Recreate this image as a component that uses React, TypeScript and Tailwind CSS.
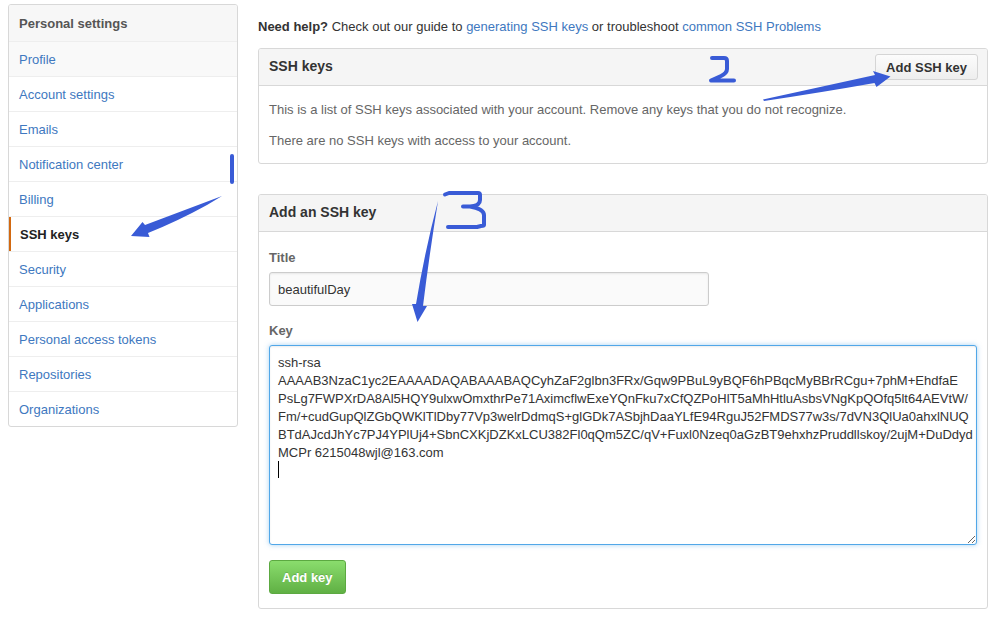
import React from 'react';

const navItems = [
  'Profile',
  'Account settings',
  'Emails',
  'Notification center',
  'Billing',
  'SSH keys',
  'Security',
  'Applications',
  'Personal access tokens',
  'Repositories',
  'Organizations',
];

const sshKey = [
  'ssh-rsa',
  'AAAAB3NzaC1yc2EAAAADAQABAAABAQCyhZaF2glbn3FRx/Gqw9PBuL9yBQF6hPBqcMyBBrRCgu+7phM+EhdfaE',
  'PsLg7FWPXrDA8Al5HQY9ulxwOmxthrPe71AximcflwExeYQnFku7xCfQZPoHlT5aMhHtluAsbsVNgKpQOfq5lt64AEVtW/',
  'Fm/+cudGupQlZGbQWKlTlDby77Vp3welrDdmqS+glGDk7ASbjhDaaYLfE94RguJ52FMDS77w3s/7dVN3QlUa0ahxlNUQ',
  'BTdAJcdJhYc7PJ4YPlUj4+SbnCXKjDZKxLCU382Fl0qQm5ZC/qV+Fuxl0Nzeq0aGzBT9ehxhzPruddllskoy/2ujM+DuDdyd',
  'MCPr 6215048wjl@163.com',
  '',
].join('\n');

function navItemClass(item: string) {
  if (item === 'SSH keys') return 'border-l-2 border-l-[#d26911] pl-[9px] font-bold text-[#222]';
  if (item === 'Profile') return 'bg-[#f9f9f9] pl-[10px] text-[#4078c0]';
  return 'pl-[10px] text-[#4078c0]';
}

function Sidebar() {
  return (
    <nav
      aria-label="Personal settings"
      className="w-[230px] shrink-0 self-start overflow-hidden rounded-[3px] border border-[#d8d8d8]"
    >
      <h2 className="h-9 bg-[#f7f7f7] pl-[10px] leading-[37px] font-bold text-[#555]">Personal settings</h2>
      <ul>
        {navItems.map((item) => (
          <li key={item} className="border-t border-[#eee]">
            <a href="#" className={`block h-[34px] leading-[35px] ${navItemClass(item)}`}>
              {item}
            </a>
          </li>
        ))}
      </ul>
    </nav>
  );
}

function Panel({ title, action, children }: { title: string; action?: React.ReactNode; children: React.ReactNode }) {
  return (
    <section className="rounded-[3px] border border-[#d8d8d8]">
      <header className="flex h-[37px] items-center justify-between rounded-t-[2px] border-b border-[#d8d8d8] bg-[#f5f5f5] pr-[9px] pl-[10px]">
        <h2 className="pb-[2px] text-sm leading-4 font-bold text-[#333]">{title}</h2>
        {action}
      </header>
      {children}
    </section>
  );
}

function Annotations() {
  return (
    <svg
      aria-hidden="true"
      className="pointer-events-none absolute top-0 left-0"
      width="995"
      height="625"
      viewBox="0 0 995 625"
      fill="none"
    >
      <g stroke="#395bd6" strokeWidth="4" strokeLinecap="round" strokeLinejoin="round">
        <path d="M232 156V182" />
        <path d="M712 58H724Q727 58 727 61V69Q727 73 721 76L711 80.500H734" />
        <path d="M445 194.500L449 193H478Q480 193 480 195V200Q480 206 470 206.500H463H470Q484 209 484 215V225Q484 226 481 226L477 227H448" />
      </g>
      <g fill="#395bd6">
        <path d="M222 196L145 225L142.500 222L131 236L149.500 237L148 233Q178 221 207 205Z" />
        <path d="M763 99.500L875 75L873 71L890.500 76.500L876.500 87L874.500 83Q824 92 764 101Z" />
        <path d="M438 201Q425 250 416 304L412 304L417.500 322L427 306L423 306Q429 257 438 201Z" />
      </g>
    </svg>
  );
}

export default function App() {
  return (
    <div className="relative flex gap-5 bg-white pt-1 pr-[7px] pb-4 pl-2 font-['Liberation_Sans',Arial,sans-serif] text-[13px] leading-[17px] text-[#333]">
      <Sidebar />
      <main className="min-w-0 flex-1 pt-[14px]">
        <p className="mb-[13px]">
          <strong>Need help?</strong> Check out our guide to{' '}
          <a href="#" className="text-[#4078c0]">generating SSH keys</a> or troubleshoot{' '}
          <a href="#" className="text-[#4078c0]">common SSH Problems</a>
        </p>

        <div className="flex flex-col gap-[30px]">
          <Panel
            title="SSH keys"
            action={
              <button
                type="button"
                className="h-[26px] rounded-[3px] border border-[#d5d5d5] bg-linear-to-b from-[#fcfcfc] to-[#eee] px-[10px] font-bold text-[#333]"
              >
                Add SSH key
              </button>
            }
          >
            <div className="flex flex-col gap-[14px] px-[10px] pt-[15px] pb-[14px] text-[#666]">
              <p>This is a list of SSH keys associated with your account. Remove any keys that you do not recognize.</p>
              <p>There are no SSH keys with access to your account.</p>
            </div>
          </Panel>

          <Panel title="Add an SSH key">
            <form className="flex flex-col items-start px-[10px] pt-[17px] pb-[14px]" onSubmit={(e) => e.preventDefault()}>
              <label htmlFor="key-title" className="mb-[6px] font-bold text-[#666]">Title</label>
              <input
                id="key-title"
                type="text"
                defaultValue="beautifulDay"
                className="mb-4 h-[34px] w-[440px] max-w-full rounded-[3px] border border-[#ccc] bg-[#fafafa] px-2 text-[#333] shadow-[inset_0_1px_2px_rgba(0,0,0,0.075)] outline-none"
              />
              <label htmlFor="key-body" className="mb-[6px] font-bold text-[#666]">Key</label>
              <div className="relative mb-[15px] w-full">
                <textarea
                  id="key-body"
                  defaultValue={sshKey}
                  spellCheck={false}
                  className="block h-[200px] w-full resize-y overflow-hidden rounded-[3px] border border-[#51a7e8] bg-white py-2 pr-px pl-2 leading-[18px] break-all text-[#333] shadow-[inset_0_1px_2px_rgba(0,0,0,0.075),0_0_5px_rgba(81,167,232,0.5)] outline-none"
                />
                <span aria-hidden="true" className="absolute top-[116px] left-[9px] h-[17px] w-px bg-black" />
              </div>
              <button
                type="submit"
                className="h-[34px] rounded-[3px] border border-[#5ca941] bg-linear-to-b from-[#8add6d] to-[#60b044] px-3 font-bold text-white [text-shadow:0_-1px_0_rgba(0,0,0,0.15)]"
              >
                Add key
              </button>
            </form>
          </Panel>
        </div>
      </main>
      <Annotations />
    </div>
  );
}
